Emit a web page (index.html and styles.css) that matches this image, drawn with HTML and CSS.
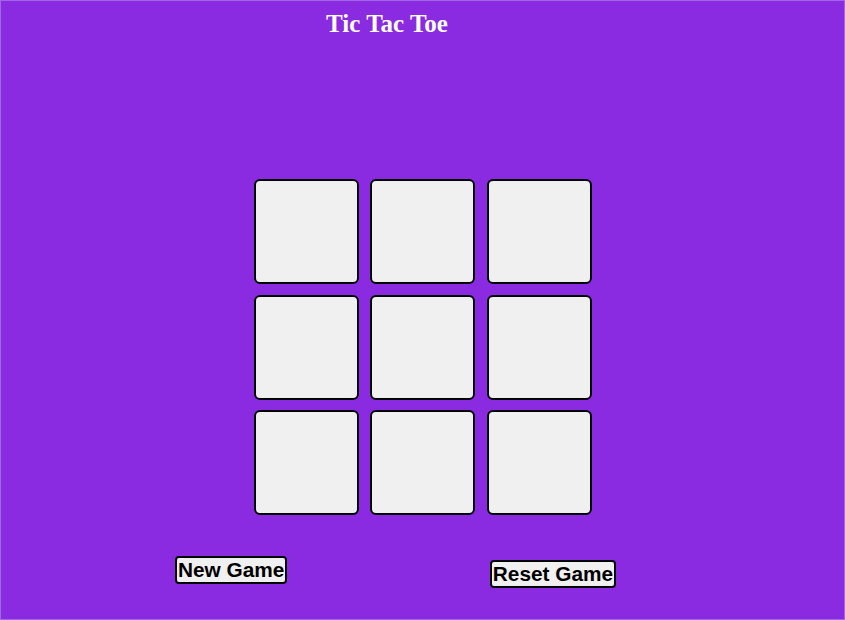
FILE: index.html
```html
<!DOCTYPE html>
<html lang="en">
<head>
<meta charset="utf-8">
<title>Tic Tac Toe</title>
<link rel="stylesheet" href="styles.css">
</head>
<body>
  <div class="page">
    <h1 class="title">Tic Tac Toe</h1>
    <div class="board">
      <div class="cell"></div>
      <div class="cell"></div>
      <div class="cell"></div>
      <div class="cell"></div>
      <div class="cell"></div>
      <div class="cell"></div>
      <div class="cell"></div>
      <div class="cell"></div>
      <div class="cell"></div>
    </div>
    <div class="controls">
      <button class="btn btn-new">New Game</button>
      <button class="btn btn-reset">Reset Game</button>
    </div>
  </div>
</body>
</html>
```
FILE: styles.css
```css
html, body {
  margin: 0;
  padding: 0;
}
body {
  background: #8a2be2;
}
.page {
  box-sizing: border-box;
  width: 845px;
  height: 620px;
  border: 1px solid #a166e8;
  background: #8a2be2;
  display: flex;
  flex-direction: column;
}
.title {
  margin: 9px 0 0 0;
  padding-right: 71px;
  text-align: center;
  font-family: "Liberation Serif", "Times New Roman", serif;
  font-weight: bold;
  font-size: 25px;
  line-height: 28px;
  color: #ffffff;
}
.board {
  margin: 141px auto 0 auto;
  display: grid;
  grid-template-columns: repeat(3, 105px);
  grid-auto-rows: 105px;
  column-gap: 11.5px;
  row-gap: 10.5px;
}
.cell {
  box-sizing: border-box;
  background: #f0f0f0;
  border: 2px solid #000;
  border-radius: 6px;
}
.controls {
  display: flex;
  align-items: flex-start;
  margin-top: 41px;
  padding-left: 174px;
  gap: 203px;
}
.btn {
  margin: 0;
  padding: 0 1px;
  background: #f0f0f0;
  border: 2px solid #000;
  border-radius: 4px;
  font-family: "Liberation Sans", Arial, sans-serif;
  font-weight: bold;
  font-size: 20.8px;
  line-height: 24px;
  color: #000;
}
.btn-reset {
  margin-top: 4px;
  padding: 0 0.5px;
}
```
